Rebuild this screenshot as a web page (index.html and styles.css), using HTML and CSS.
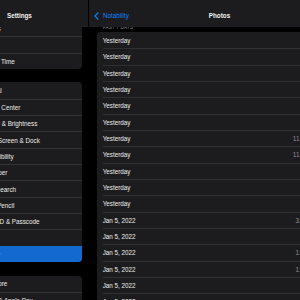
FILE: index.html
```html
<!DOCTYPE html>
<html>
<head>
<meta charset="utf-8">
<link rel="stylesheet" href="styles.css">
</head>
<body>
<div class="app">
  <aside class="sidebar">
    <div class="sb-head">Settings</div>
    <div class="sb-body">
      <div class="group g1">
        <div class="row"><span class="label">Sounds</span></div>
        <div class="row"><span class="label">Focus</span></div>
        <div class="row"><span class="label">Screen Time</span></div>
      </div>
      <div class="group">
        <div class="row"><span class="label">General</span></div>
        <div class="row"><span class="label">Control Center</span></div>
        <div class="row"><span class="label">Display &amp; Brightness</span></div>
        <div class="row"><span class="label">Home Screen &amp; Dock</span></div>
        <div class="row"><span class="label">Accessibility</span></div>
        <div class="row"><span class="label">Wallpaper</span></div>
        <div class="row"><span class="label">Siri &amp; Search</span></div>
        <div class="row"><span class="label">Apple Pencil</span></div>
        <div class="row"><span class="label">Touch ID &amp; Passcode</span></div>
        <div class="row"><span class="label">Battery</span></div>
        <div class="row selected"><span class="label">Privacy</span></div>
      </div>
      <div class="group">
        <div class="row"><span class="label">App Store</span></div>
        <div class="row"><span class="label">Wallet &amp; Apple Pay</span></div>
      </div>
    </div>
  </aside>
  <main class="main">
    <div class="main-head">
      <div class="back">
        <svg class="chev" width="5" height="8" viewBox="0 0 5 8"><path d="M4 0.8 L1 4 L4 7.2" fill="none" stroke="#0a84ff" stroke-width="1.2" stroke-linecap="round" stroke-linejoin="round"/></svg>
        <span>Notability</span>
      </div>
      <div class="title">Photos</div>
      <div></div>
    </div>
    <div class="content">
      <div class="section"><span>PAST 7 DAYS</span></div>
      <div class="list">
        <div class="item"><span class="date">Yesterday</span><span class="time">9:41</span></div>
        <div class="item"><span class="date">Yesterday</span><span class="time">9:38</span></div>
        <div class="item"><span class="date">Yesterday</span><span class="time">9:12</span></div>
        <div class="item"><span class="date">Yesterday</span><span class="time">8:55</span></div>
        <div class="item"><span class="date">Yesterday</span><span class="time">8:20</span></div>
        <div class="item"><span class="date">Yesterday</span><span class="time">7:47</span></div>
        <div class="item"><span class="date">Yesterday</span><span class="time">11:48 AM</span></div>
        <div class="item"><span class="date">Yesterday</span><span class="time">11:46 AM</span></div>
        <div class="item"><span class="date">Yesterday</span><span class="time">9:05</span></div>
        <div class="item"><span class="date">Yesterday</span><span class="time">8:59</span></div>
        <div class="item"><span class="date">Yesterday</span><span class="time">8:31</span></div>
        <div class="item"><span class="date">Jan 5, 2022</span><span class="time">3:02 PM</span></div>
        <div class="item"><span class="date">Jan 5, 2022</span><span class="time">9:14</span></div>
        <div class="item"><span class="date">Jan 5, 2022</span><span class="time">1:05 PM</span></div>
        <div class="item"><span class="date">Jan 5, 2022</span><span class="time">1:02 PM</span></div>
        <div class="item"><span class="date">Jan 5, 2022</span><span class="time">9:40</span></div>
        <div class="item"><span class="date">Jan 5, 2022</span><span class="time">9:12</span></div>
      </div>
    </div>
  </main>
</div>
</body>
</html>
```
FILE: styles.css
```css
* { box-sizing: border-box; }
html, body {
  margin: 0;
  padding: 0;
  background: #000;
}
body {
  width: 300px;
  height: 300px;
  overflow: hidden;
  font-family: "Liberation Sans", Arial, sans-serif;
  font-size: 6.3px;
  color: #ececec;
}
.app {
  display: flex;
  height: 300px;
}
.sidebar {
  width: 88px;
  flex: none;
  display: flex;
  flex-direction: column;
  margin-right: 1px;
}
.sb-head {
  height: 27px;
  flex: none;
  background: #1c1c1e;
  padding: 12px 0 0 7px;
  font-weight: bold;
  line-height: 8px;
  color: #f2f2f2;
}
.sb-body {
  flex: 1;
  min-height: 0;
  overflow: hidden;
  display: flex;
  flex-direction: column;
  gap: 13.5px;
  padding-right: 6px;
}
.group {
  flex: none;
  background: #1c1c1e;
  border-radius: 0 4px 4px 0;
  overflow: hidden;
}
.g1 { margin-top: -7.07px; }
.row {
  height: 16.33px;
  display: flex;
  align-items: center;
  white-space: nowrap;
}
.row + .row { border-top: 1px solid #333335; }
.label { margin-left: -20.7px; }
.row.selected { background: #1469d0; border-top-color: #1469d0; }

.main {
  flex: 1;
  min-width: 0;
  display: flex;
  flex-direction: column;
  overflow: hidden;
}
.main-head {
  width: 261px;
  height: 27px;
  flex: none;
  background: #1c1c1e;
  display: grid;
  grid-template-columns: 1fr auto 1fr;
  align-items: start;
  padding-top: 12px;
  line-height: 8px;
}
.back {
  display: flex;
  align-items: center;
  gap: 4px;
  padding-left: 5px;
  color: #0a84ff;
  white-space: nowrap;
}
.chev { flex: none; display: block; }
.title {
  font-weight: bold;
  color: #f2f2f2;
}
.content {
  width: 261px;
  padding-left: 8px;
  padding-right: 8px;
}
.section {
  height: 5px;
  overflow: hidden;
  padding-left: 5.7px;
  font-size: 4.5px;
  color: #8e8e93;
  letter-spacing: 0.2px;
}
.section span {
  display: block;
  line-height: 5px;
  margin-top: -1.6px;
}
.list {
  background: #1c1c1e;
  border-radius: 4px;
  overflow: hidden;
}
.item {
  height: 16.33px;
  margin-left: 5.7px;
  padding-right: 23px;
  display: flex;
  align-items: center;
  white-space: nowrap;
}
.item + .item { border-top: 1px solid #2f2f31; }
.time {
  margin-left: auto;
  color: #8e8e93;
}
```
